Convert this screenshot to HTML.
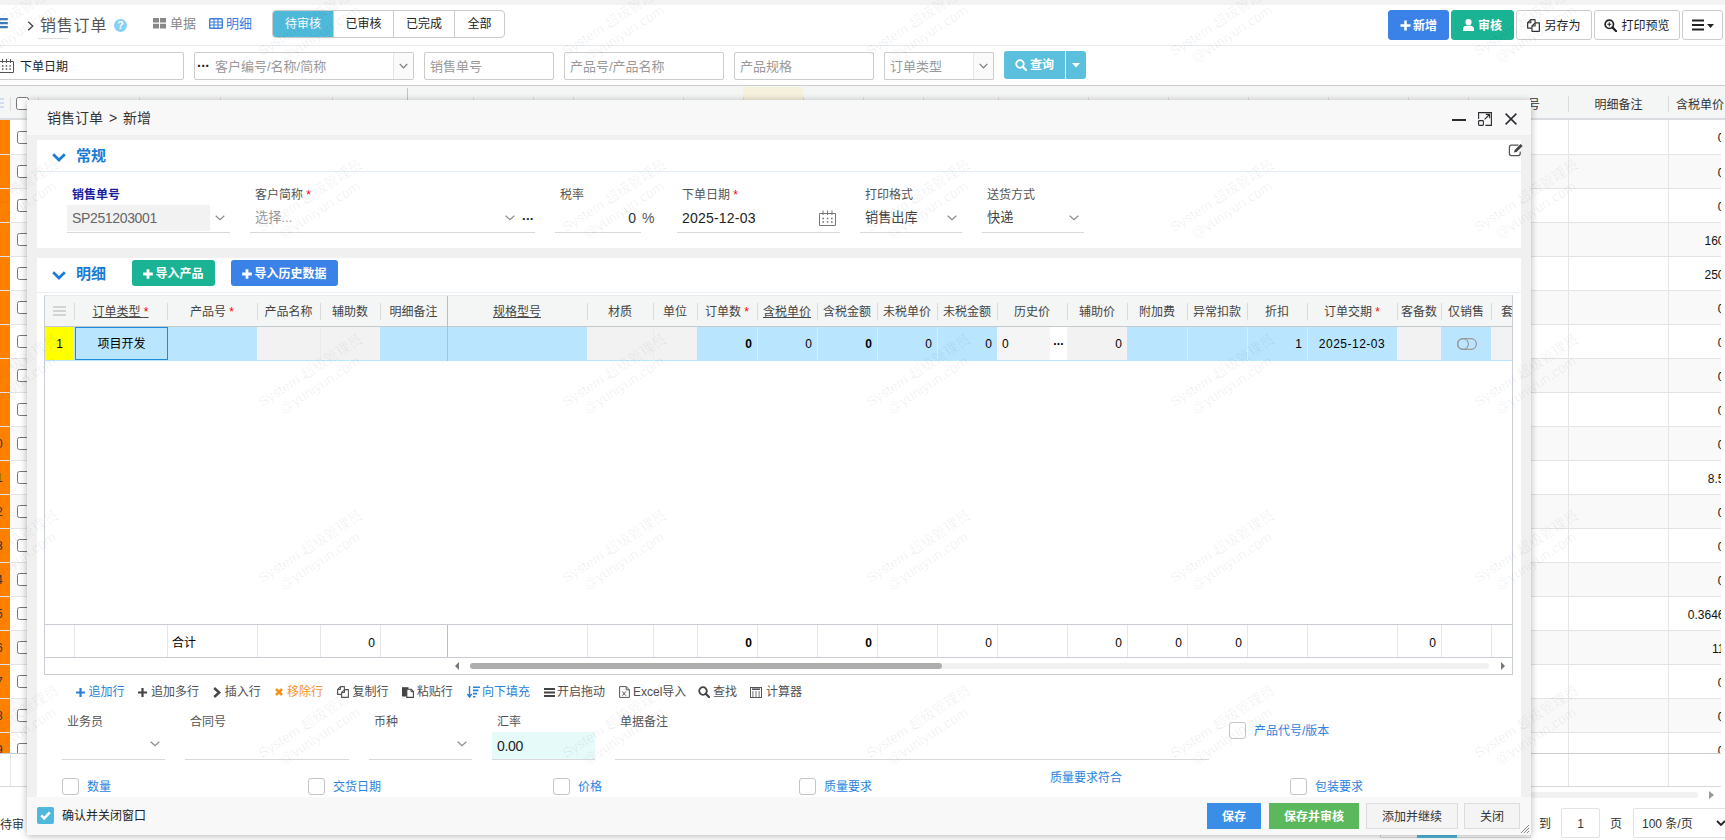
<!DOCTYPE html>
<html lang="zh-CN">
<head>
<meta charset="utf-8">
<title>销售订单</title>
<style>
*{box-sizing:border-box;margin:0;padding:0}
html,body{width:1725px;height:840px;overflow:hidden;background:#fff}
body{font-family:"Liberation Sans","Noto Sans CJK SC",sans-serif;font-size:12px;color:#333;position:relative}
.abs{position:absolute}
svg{display:block}
/* ---------- background page ---------- */
#topstrip{left:0;top:0;width:1725px;height:5px;background:#f3f3f4}
#hdrline{left:0;top:45px;width:1725px;height:1px;background:#e7eaec}
#fltline{left:0;top:85px;width:1725px;height:1px;background:#cfcfcf}
.title{left:41px;top:12px;font-size:18px;line-height:24px;color:#555;letter-spacing:1px;white-space:nowrap}
.tabs{left:272px;top:10px;height:28px;display:flex;border:1px solid #ccc;border-radius:4px;overflow:hidden;background:#fff}
.tabs div{height:26px;line-height:27px;text-align:center;font-size:12px;color:#222;border-right:1px solid #ccc}
.tabs div:last-child{border-right:0}
.tabs .on{background:#4fb9d9;color:#fff}
.tbtn{top:10px;height:30px;line-height:30px;border-radius:3px;font-size:12px;white-space:nowrap;text-align:center;color:#222;border:1px solid #ccc;background:#fff}
.finp{top:52px;height:28px;border:1px solid #ccc;border-radius:2px;background:#fff;font-size:13px;line-height:27px;color:#999;padding-left:5px;white-space:nowrap;overflow:hidden}
#bgtable{left:0;top:86px;width:1725px;height:700px;
  background:#fff}
.bgrow{left:0;width:1725px;height:34px;border-bottom:1px solid #e4e4e4}
.bgrow.alt{background:#f9f9f9}
.cb{width:13px;height:13px;border:1px solid #767676;border-radius:2.5px;background:#fff}
.vline{width:1px;background:#e6e6e6}
/* ---------- modal ---------- */
#modal{left:27px;top:100px;width:1504px;height:735px;background:#f0f0f0;box-shadow:0 1px 6px rgba(0,0,0,.28);overflow:hidden}
#mhead{left:0;top:0;width:1504px;height:35px;background:#f8f8f8}
#mfoot{left:0;top:697px;width:1504px;height:38px;background:#f8f8f8}
.panel{background:#fff}
.h5{font-size:15px;font-weight:bold;color:#1a7bd4;line-height:20px;white-space:nowrap}
.lbl{font-size:12px;color:#555;line-height:16px;white-space:nowrap}
.red{color:#f00}
.uline{height:1px;background:#d9d9d9}
.val{font-size:13.2px;line-height:20px;color:#333;white-space:nowrap}
.btn{border-radius:3px;color:#fff;font-size:12px;text-align:center;white-space:nowrap}
/* grid */
#grid{left:17px;top:195px;width:1469px;height:379px;border:1px solid #c9d0d6;background:#fff;overflow:hidden}
.gh{top:0;height:31px;background:#f5f7f7;line-height:31px;text-align:center;font-size:12px;color:#444;white-space:nowrap;overflow:hidden}
.gh u{text-decoration:underline}
.gsep{top:9px;width:1px;height:17px;background:#dcdcdc}
.gc{top:32px;height:33px;line-height:33px;font-size:12px;color:#000;white-space:nowrap;overflow:hidden;padding:0 5px}
.gc.b{background:#b9e5fe}
.gc.g{background:#f2f2f2}
.gc.r{text-align:right}
.gt{top:329px;height:32px;line-height:32px;font-size:12px;color:#000;text-align:right;padding:0 5px;border-left:1px solid #e3e3e3}
.tool{top:583px;font-size:12px;line-height:18px;color:#444;white-space:nowrap}
.chk{width:17px;height:17px;border:1px solid #c4c4c4;border-radius:3px;background:#fff}
.clbl{font-size:12px;line-height:16px;color:#2b83e0;white-space:nowrap}
.fb{line-height:29px;font-size:12px;text-align:center;white-space:nowrap}
.wm{font-size:14px;line-height:17px;color:rgba(0,0,0,.065);transform:rotate(-33deg);transform-origin:center;white-space:nowrap;text-align:center;pointer-events:none}
.ghd{background:none;text-align:center;font-size:12px;color:#444;white-space:nowrap;overflow:hidden}
.gcell{line-height:35px;font-size:12px;color:#000;white-space:nowrap;overflow:hidden;padding:0 5px}
.tool{top:auto}
</style>
</head>
<body>
<!-- ======= BACKGROUND PAGE ======= -->
<div class="abs" style="left:0px;top:0px;width:1725px;height:5px;background:#f3f3f4"></div>
<div class="abs" style="left:0px;top:45px;width:1725px;height:1px;background:#e7eaec"></div>
<div class="abs" style="left:0px;top:85px;width:1725px;height:1px;background:#cdcdcd"></div>
<svg class="abs" style="left:0;top:17px" width="10" height="12" viewBox="0 0 10 12"><path d="M-4 2.2h11.8M-4 6.2h11.8M-4 10.2h11.8" stroke="#3f7cba" stroke-width="2.2" fill="none"/></svg>
<svg class="abs" style="left:27px;top:21px" width="7" height="10" viewBox="0 0 7 10"><path d="M1.2 .8l4.6 4.2-4.6 4.2" stroke="#444" stroke-width="1.3" fill="none"/></svg>
<div class="abs" style="left:40px;top:14px;font-size:16px;line-height:24px;color:#555;letter-spacing:.8px;white-space:nowrap">销售订单</div>
<div class="abs" style="left:38px;top:38px;width:30px;height:1px;background:#ddd"></div>
<svg class="abs" style="left:114px;top:19px" width="13" height="13" viewBox="0 0 13 13"><circle cx="6.5" cy="6.5" r="6.5" fill="#84d0f6"/><text x="6.5" y="10.3" font-size="10.5" font-weight="bold" fill="#fff" text-anchor="middle" font-family="Liberation Sans,sans-serif">?</text></svg>
<svg class="abs" style="left:153px;top:18px" width="13" height="11" viewBox="0 0 13 11"><path d="M0 0h6v4.6H0zM7 0h6v4.6H7zM0 5.8h6v4.6H0zM7 5.8h6v4.6H7z" fill="#888"/></svg>
<div class="abs" style="left:170px;top:15px;font-size:13px;line-height:18px;color:#888;white-space:nowrap">单据</div>
<svg class="abs" style="left:209px;top:18px" width="14" height="11" viewBox="0 0 14 11"><rect x=".7" y=".7" width="12.6" height="9.6" rx="1" fill="none" stroke="#3b7de0" stroke-width="1.4"/><path d="M.7 4h12.6M.7 7h12.6M5 .7v9.6M9 .7v9.6" stroke="#3b7de0" stroke-width="1.1"/></svg>
<div class="abs" style="left:226px;top:15px;font-size:13px;line-height:18px;color:#3b7de0;white-space:nowrap">明细</div>
<div class="abs tabs"><div class="on" style="width:61px">待审核</div><div style="width:60px">已审核</div><div style="width:61px">已完成</div><div style="width:49px">全部</div></div>
<div class="abs tbtn" style="left:1388px;top:10px;width:61px;height:30px;background:#3b82e8;border-color:#3b82e8;color:#fff;font-weight:bold"><svg style="display:inline-block;vertical-align:-1px;margin-right:2px" width="11" height="11" viewBox="0 0 11 11"><path d="M5.5 .5v10M.5 5.5h10" stroke="#fff" stroke-width="2.6" fill="none"/></svg>新增</div>
<div class="abs tbtn" style="left:1451px;top:10px;width:63px;height:30px;background:#1ab394;border-color:#1ab394;color:#fff;font-weight:bold"><svg style="display:inline-block;vertical-align:-1px;margin-right:4px" width="11" height="12" viewBox="0 0 11 12"><circle cx="5.5" cy="3.2" r="3.1" fill="#fff"/><path d="M0 12V9.6C0 7.8 2 7 3.5 6.8h4C9 7 11 7.8 11 9.6V12z" fill="#fff"/></svg>审核</div>
<div class="abs tbtn" style="left:1516px;top:10px;width:76px;height:30px;"><svg style="display:inline-block;vertical-align:-2px;margin-right:4px" width="13" height="13" viewBox="0 0 12 12"><path d="M7.4 3.3V.6H3.5L.6 3.5v4.9h3.8" stroke="#333" stroke-width="1.1" fill="none" stroke-linejoin="round"/><path d="M3.5 .6v2.9H.6" stroke="#333" stroke-width="1" fill="none"/><path d="M7.5 3.6h3.9v7.8H4.6V6.5z" stroke="#333" stroke-width="1.1" fill="none" stroke-linejoin="round"/><path d="M7.5 3.6v2.9H4.6" stroke="#333" stroke-width="1" fill="none"/></svg>另存为</div>
<div class="abs tbtn" style="left:1594px;top:10px;width:86px;height:30px;"><svg style="display:inline-block;vertical-align:-2px;margin-right:4px" width="13" height="13" viewBox="0 0 13 13"><circle cx="5.3" cy="5.3" r="4.2" stroke="#222" stroke-width="1.7" fill="none"/><path d="M8.4 8.4l3.8 3.8" stroke="#222" stroke-width="2.2" stroke-linecap="round"/><path d="M5.3 3.3v4M3.3 5.3h4" stroke="#222" stroke-width="1.1"/></svg>打印预览</div>
<div class="abs tbtn" style="left:1682px;top:10px;width:41px;height:30px;"><svg style="display:inline-block;vertical-align:-1px" width="22" height="12" viewBox="0 0 22 12"><path d="M0 1.5h12M0 6h12M0 10.5h12" stroke="#222" stroke-width="2"/><path d="M15 5h7l-3.5 4z" fill="#222"/></svg></div>
<div class="abs finp" style="left:-6px;top:52px;width:190px;height:28px;"></div>
<div class="abs" style="left:-1px;top:58px"><svg width="15" height="15" viewBox="0 0 15 15"><path d="M.5 3.5h14v11H.5z" fill="none" stroke="#555" stroke-width="1"/><path d="M3.5 1v4M7.5 1v4M11.5 1v4" stroke="#555" stroke-width="1"/><path d="M3 8h1.5M6.7 8h1.5M10.4 8h1.5M3 11h1.5M6.7 11h1.5M10.4 11h1.5" stroke="#555" stroke-width="1.4"/></svg></div>
<div class="abs" style="left:20px;top:58px;font-size:12px;line-height:18px;color:#222;white-space:nowrap">下单日期</div>
<div class="abs finp" style="left:194px;top:52px;width:220px;height:28px;padding-left:20px">客户编号/名称/简称</div>
<div class="abs" style="left:197px;top:55px;font-size:14px;line-height:22px;color:#222;font-weight:bold;letter-spacing:-.5px">···</div>
<div class="abs" style="left:393px;top:53px;width:20px;height:26px;background:#fafafa;border-left:1px solid #e5e5e5"></div>
<div class="abs" style="left:399px;top:63px"><svg width="9" height="6" viewBox="0 0 9 6"><path d="M.7 .8l3.8 4L8.3 .8" stroke="#777" stroke-width="1.2" fill="none"/></svg></div>
<div class="abs finp" style="left:424px;top:52px;width:130px;height:28px;">销售单号</div>
<div class="abs finp" style="left:564px;top:52px;width:160px;height:28px;">产品号/产品名称</div>
<div class="abs finp" style="left:734px;top:52px;width:140px;height:28px;">产品规格</div>
<div class="abs finp" style="left:884px;top:52px;width:110px;height:28px;border-radius:1px;line-height:28px">订单类型</div>
<div class="abs" style="left:973px;top:53px;width:20px;height:26px;background:#fafafa;border-left:1px solid #e5e5e5"></div>
<div class="abs" style="left:979px;top:63px"><svg width="9" height="6" viewBox="0 0 9 6"><path d="M.7 .8l3.8 4L8.3 .8" stroke="#777" stroke-width="1.2" fill="none"/></svg></div>
<div class="abs" style="left:1004px;top:51px;width:61px;height:28px;background:#5bc0de;border-radius:3px 0 0 3px;color:#fff;font-size:12px;font-weight:bold;line-height:29px;text-align:center;white-space:nowrap"><svg style="display:inline-block;vertical-align:-2px;margin-right:3px" width="12" height="12" viewBox="0 0 12 12"><circle cx="5" cy="5" r="3.8" stroke="#fff" stroke-width="1.8" fill="none"/><path d="M7.8 7.8l3.2 3.2" stroke="#fff" stroke-width="2.2" stroke-linecap="round"/></svg>查询</div>
<div class="abs" style="left:1066px;top:51px;width:20px;height:28px;background:#5bc0de;border-radius:0 3px 3px 0"><svg style="margin:12px 0 0 6px" width="8" height="5" viewBox="0 0 8 5"><path d="M0 0h8L4 4.5z" fill="#fff"/></svg></div>
<div class="abs" style="left:0px;top:86px;width:1725px;height:34px;background:#f4f6f6;border-bottom:2px solid #d9dddf"></div>
<div class="abs" style="left:743px;top:87px;width:60px;height:32px;background:#f5f1dc"></div>
<svg class="abs" style="left:0;top:98px" width="6" height="10" viewBox="0 0 6 10"><path d="M-3 1h7M-3 5h7M-3 9h7" stroke="#c4d4f4" stroke-width="1.4"/></svg>
<div class="abs" style="left:10px;top:97px;width:1px;height:14px;background:#ddd"></div>
<div class="abs cb" style="left:16px;top:97px;width:13px;height:13px;"></div>
<div class="abs" style="left:38px;top:97px;width:1px;height:14px;background:#dcdcdc"></div>
<div class="abs" style="left:139px;top:97px;width:1px;height:14px;background:#dcdcdc"></div>
<div class="abs" style="left:220px;top:97px;width:1px;height:14px;background:#dcdcdc"></div>
<div class="abs" style="left:332px;top:97px;width:1px;height:14px;background:#dcdcdc"></div>
<div class="abs" style="left:473px;top:97px;width:1px;height:14px;background:#dcdcdc"></div>
<div class="abs" style="left:533px;top:97px;width:1px;height:14px;background:#dcdcdc"></div>
<div class="abs" style="left:573px;top:97px;width:1px;height:14px;background:#dcdcdc"></div>
<div class="abs" style="left:683px;top:97px;width:1px;height:14px;background:#dcdcdc"></div>
<div class="abs" style="left:743px;top:97px;width:1px;height:14px;background:#dcdcdc"></div>
<div class="abs" style="left:803px;top:97px;width:1px;height:14px;background:#dcdcdc"></div>
<div class="abs" style="left:863px;top:97px;width:1px;height:14px;background:#dcdcdc"></div>
<div class="abs" style="left:923px;top:97px;width:1px;height:14px;background:#dcdcdc"></div>
<div class="abs" style="left:998px;top:97px;width:1px;height:14px;background:#dcdcdc"></div>
<div class="abs" style="left:1088px;top:97px;width:1px;height:14px;background:#dcdcdc"></div>
<div class="abs" style="left:1168px;top:97px;width:1px;height:14px;background:#dcdcdc"></div>
<div class="abs" style="left:1248px;top:97px;width:1px;height:14px;background:#dcdcdc"></div>
<div class="abs" style="left:1328px;top:97px;width:1px;height:14px;background:#dcdcdc"></div>
<div class="abs" style="left:1408px;top:97px;width:1px;height:14px;background:#dcdcdc"></div>
<div class="abs" style="left:1468px;top:97px;width:1px;height:14px;background:#dcdcdc"></div>
<div class="abs" style="left:407px;top:88px;width:1px;height:31px;background:#bfc4c8"></div>
<div class="abs" style="left:1568px;top:96px;width:1px;height:16px;background:#dcdcdc"></div>
<div class="abs" style="left:1668px;top:96px;width:1px;height:16px;background:#dcdcdc"></div>
<div class="abs" style="left:1528px;top:97px;font-size:12px;line-height:16px;color:#333">号</div>
<div class="abs" style="left:1569px;top:87px;width:99px;height:32px;text-align:center;font-size:12px;line-height:37px;color:#333;white-space:nowrap">明细备注</div>
<div class="abs" style="left:1676px;top:96px;font-size:12px;line-height:18px;color:#333;white-space:nowrap">含税单价</div>
<div class="abs" style="left:0px;top:120px;width:1721px;height:35px;background:#fff;border-bottom:1px solid #e3e3e3;overflow:hidden"><div class="abs" style="left:0;top:0;width:10px;height:35px;background:#ff8000;border-bottom:1px solid #f6b77c"></div><div class="abs cb" style="left:17px;top:10.5px"></div><div class="abs" style="right:-3.5px;top:9.0px;line-height:18px;font-size:12px;color:#111;white-space:nowrap">0</div></div>
<div class="abs" style="left:0px;top:155px;width:1721px;height:34px;background:#f9f9f9;border-bottom:1px solid #e3e3e3;overflow:hidden"><div class="abs" style="left:0;top:0;width:10px;height:34px;background:#ff8000;border-bottom:1px solid #f6b77c"></div><div class="abs cb" style="left:17px;top:10.0px"></div><div class="abs" style="right:-3.5px;top:8.5px;line-height:18px;font-size:12px;color:#111;white-space:nowrap">0</div></div>
<div class="abs" style="left:0px;top:189px;width:1721px;height:34px;background:#fff;border-bottom:1px solid #e3e3e3;overflow:hidden"><div class="abs" style="left:0;top:0;width:10px;height:34px;background:#ff8000;border-bottom:1px solid #f6b77c"></div><div class="abs cb" style="left:17px;top:10.0px"></div><div class="abs" style="right:-3.5px;top:8.5px;line-height:18px;font-size:12px;color:#111;white-space:nowrap">0</div></div>
<div class="abs" style="left:0px;top:223px;width:1721px;height:34px;background:#f9f9f9;border-bottom:1px solid #e3e3e3;overflow:hidden"><div class="abs" style="left:0;top:0;width:10px;height:34px;background:#ff8000;border-bottom:1px solid #f6b77c"></div><div class="abs cb" style="left:17px;top:10.0px"></div><div class="abs" style="right:-3.5px;top:8.5px;line-height:18px;font-size:12px;color:#111;white-space:nowrap">160</div></div>
<div class="abs" style="left:0px;top:257px;width:1721px;height:34px;background:#fff;border-bottom:1px solid #e3e3e3;overflow:hidden"><div class="abs" style="left:0;top:0;width:10px;height:34px;background:#ff8000;border-bottom:1px solid #f6b77c"></div><div class="abs cb" style="left:17px;top:10.0px"></div><div class="abs" style="right:-3.5px;top:8.5px;line-height:18px;font-size:12px;color:#111;white-space:nowrap">250</div></div>
<div class="abs" style="left:0px;top:291px;width:1721px;height:34px;background:#f9f9f9;border-bottom:1px solid #e3e3e3;overflow:hidden"><div class="abs" style="left:0;top:0;width:10px;height:34px;background:#ff8000;border-bottom:1px solid #f6b77c"></div><div class="abs cb" style="left:17px;top:10.0px"></div><div class="abs" style="right:-3.5px;top:8.5px;line-height:18px;font-size:12px;color:#111;white-space:nowrap">0</div></div>
<div class="abs" style="left:0px;top:325px;width:1721px;height:34px;background:#fff;border-bottom:1px solid #e3e3e3;overflow:hidden"><div class="abs" style="left:0;top:0;width:10px;height:34px;background:#ff8000;border-bottom:1px solid #f6b77c"></div><div class="abs cb" style="left:17px;top:10.0px"></div><div class="abs" style="right:-3.5px;top:8.5px;line-height:18px;font-size:12px;color:#111;white-space:nowrap">0</div></div>
<div class="abs" style="left:0px;top:359px;width:1721px;height:34px;background:#f9f9f9;border-bottom:1px solid #e3e3e3;overflow:hidden"><div class="abs" style="left:0;top:0;width:10px;height:34px;background:#ff8000;border-bottom:1px solid #f6b77c"></div><div class="abs cb" style="left:17px;top:10.0px"></div><div class="abs" style="right:-3.5px;top:8.5px;line-height:18px;font-size:12px;color:#111;white-space:nowrap">0</div></div>
<div class="abs" style="left:0px;top:393px;width:1721px;height:34px;background:#fff;border-bottom:1px solid #e3e3e3;overflow:hidden"><div class="abs" style="left:0;top:0;width:10px;height:34px;background:#ff8000;border-bottom:1px solid #f6b77c"></div><div class="abs cb" style="left:17px;top:10.0px"></div><div class="abs" style="right:-3.5px;top:8.5px;line-height:18px;font-size:12px;color:#111;white-space:nowrap">0</div></div>
<div class="abs" style="left:0px;top:427px;width:1721px;height:34px;background:#f9f9f9;border-bottom:1px solid #e3e3e3;overflow:hidden"><div class="abs" style="left:0;top:0;width:10px;height:34px;background:#ff8000;border-bottom:1px solid #f6b77c"></div><div class="abs" style="left:-4px;top:9.0px;font-size:12px;line-height:16px;color:#333">0</div><div class="abs cb" style="left:17px;top:10.0px"></div><div class="abs" style="right:-3.5px;top:8.5px;line-height:18px;font-size:12px;color:#111;white-space:nowrap">0</div></div>
<div class="abs" style="left:0px;top:461px;width:1721px;height:34px;background:#fff;border-bottom:1px solid #e3e3e3;overflow:hidden"><div class="abs" style="left:0;top:0;width:10px;height:34px;background:#ff8000;border-bottom:1px solid #f6b77c"></div><div class="abs" style="left:-4px;top:9.0px;font-size:12px;line-height:16px;color:#333">1</div><div class="abs cb" style="left:17px;top:10.0px"></div><div class="abs" style="right:-3.5px;top:8.5px;line-height:18px;font-size:12px;color:#111;white-space:nowrap">8.5</div></div>
<div class="abs" style="left:0px;top:495px;width:1721px;height:34px;background:#f9f9f9;border-bottom:1px solid #e3e3e3;overflow:hidden"><div class="abs" style="left:0;top:0;width:10px;height:34px;background:#ff8000;border-bottom:1px solid #f6b77c"></div><div class="abs" style="left:-4px;top:9.0px;font-size:12px;line-height:16px;color:#333">2</div><div class="abs cb" style="left:17px;top:10.0px"></div><div class="abs" style="right:-3.5px;top:8.5px;line-height:18px;font-size:12px;color:#111;white-space:nowrap">0</div></div>
<div class="abs" style="left:0px;top:529px;width:1721px;height:34px;background:#fff;border-bottom:1px solid #e3e3e3;overflow:hidden"><div class="abs" style="left:0;top:0;width:10px;height:34px;background:#ff8000;border-bottom:1px solid #f6b77c"></div><div class="abs" style="left:-4px;top:9.0px;font-size:12px;line-height:16px;color:#333">3</div><div class="abs cb" style="left:17px;top:10.0px"></div><div class="abs" style="right:-3.5px;top:8.5px;line-height:18px;font-size:12px;color:#111;white-space:nowrap">0</div></div>
<div class="abs" style="left:0px;top:563px;width:1721px;height:34px;background:#f9f9f9;border-bottom:1px solid #e3e3e3;overflow:hidden"><div class="abs" style="left:0;top:0;width:10px;height:34px;background:#ff8000;border-bottom:1px solid #f6b77c"></div><div class="abs" style="left:-4px;top:9.0px;font-size:12px;line-height:16px;color:#333">4</div><div class="abs cb" style="left:17px;top:10.0px"></div><div class="abs" style="right:-3.5px;top:8.5px;line-height:18px;font-size:12px;color:#111;white-space:nowrap">0</div></div>
<div class="abs" style="left:0px;top:597px;width:1721px;height:34px;background:#fff;border-bottom:1px solid #e3e3e3;overflow:hidden"><div class="abs" style="left:0;top:0;width:10px;height:34px;background:#ff8000;border-bottom:1px solid #f6b77c"></div><div class="abs" style="left:-4px;top:9.0px;font-size:12px;line-height:16px;color:#333">5</div><div class="abs cb" style="left:17px;top:10.0px"></div><div class="abs" style="right:-3.5px;top:8.5px;line-height:18px;font-size:12px;color:#111;white-space:nowrap">0.3646</div></div>
<div class="abs" style="left:0px;top:631px;width:1721px;height:34px;background:#f9f9f9;border-bottom:1px solid #e3e3e3;overflow:hidden"><div class="abs" style="left:0;top:0;width:10px;height:34px;background:#ff8000;border-bottom:1px solid #f6b77c"></div><div class="abs" style="left:-4px;top:9.0px;font-size:12px;line-height:16px;color:#333">6</div><div class="abs cb" style="left:17px;top:10.0px"></div><div class="abs" style="right:-3.5px;top:8.5px;line-height:18px;font-size:12px;color:#111;white-space:nowrap">11</div></div>
<div class="abs" style="left:0px;top:665px;width:1721px;height:34px;background:#fff;border-bottom:1px solid #e3e3e3;overflow:hidden"><div class="abs" style="left:0;top:0;width:10px;height:34px;background:#ff8000;border-bottom:1px solid #f6b77c"></div><div class="abs" style="left:-4px;top:9.0px;font-size:12px;line-height:16px;color:#333">7</div><div class="abs cb" style="left:17px;top:10.0px"></div><div class="abs" style="right:-3.5px;top:8.5px;line-height:18px;font-size:12px;color:#111;white-space:nowrap">0</div></div>
<div class="abs" style="left:0px;top:699px;width:1721px;height:34px;background:#f9f9f9;border-bottom:1px solid #e3e3e3;overflow:hidden"><div class="abs" style="left:0;top:0;width:10px;height:34px;background:#ff8000;border-bottom:1px solid #f6b77c"></div><div class="abs" style="left:-4px;top:9.0px;font-size:12px;line-height:16px;color:#333">8</div><div class="abs cb" style="left:17px;top:10.0px"></div><div class="abs" style="right:-3.5px;top:8.5px;line-height:18px;font-size:12px;color:#111;white-space:nowrap">0</div></div>
<div class="abs" style="left:0px;top:733px;width:1721px;height:20px;background:#fff;overflow:hidden"><div class="abs" style="left:0;top:0;width:10px;height:20px;background:#ff8000;"></div><div class="abs" style="left:-4px;top:9.0px;font-size:12px;line-height:16px;color:#333">9</div><div class="abs cb" style="left:17px;top:10.0px"></div><div class="abs" style="right:-3.5px;top:8.5px;line-height:18px;font-size:12px;color:#111;white-space:nowrap">0</div></div>
<div class="abs" style="left:1568px;top:120px;width:1px;height:666px;background:#e6e6e6"></div>
<div class="abs" style="left:1668px;top:120px;width:1px;height:666px;background:#e6e6e6"></div>
<div class="abs" style="left:10px;top:753px;width:1px;height:33px;background:#e6e6e6"></div>
<div class="abs" style="left:30px;top:753px;width:1px;height:33px;background:#e6e6e6"></div>
<div class="abs" style="left:0px;top:753px;width:1721px;height:1px;background:#c9cfd3"></div>
<div class="abs" style="left:0px;top:786px;width:1721px;height:1px;background:#d9d9d9"></div>
<div class="abs" style="left:1531px;top:792px;width:167px;height:6px;background:#f1f1f1;border-radius:3px"></div>
<svg class="abs" style="left:1709px;top:791px" width="5" height="8" viewBox="0 0 5 8"><path d="M0 0l5 4-5 4z" fill="#999"/></svg>
<div class="abs" style="left:0px;top:817px;font-size:12px;line-height:16px;color:#333;white-space:nowrap">待审</div>
<div class="abs" style="left:1539px;top:815px;font-size:12px;line-height:18px;color:#333">到</div>
<div class="abs" style="left:1561px;top:808px;width:39px;height:30px;border:1px solid #e2e2e2;border-radius:2px;text-align:center;font-size:12px;line-height:30px;color:#333">1</div>
<div class="abs" style="left:1610px;top:815px;font-size:12px;line-height:18px;color:#333">页</div>
<div class="abs" style="left:1633px;top:808px;width:100px;height:30px;border:1px solid #e2e2e2;border-radius:2px;font-size:12px;line-height:30px;color:#333;padding-left:8px;white-space:nowrap">100 条/页</div>
<svg class="abs" style="left:1716px;top:820px" width="10" height="7" viewBox="0 0 10 7"><path d="M1 1l4 4 4-4" stroke="#222" stroke-width="1.8" fill="none"/></svg>
<div class="abs" style="left:1380px;top:808px;width:151px;height:30px;border:1px solid #ddd"></div>
<div class="abs" style="left:1417px;top:808px;width:40px;height:30px;background:#4fb9d9"></div>
<!-- ======= MODAL ======= -->
<div class="abs" style="left:27px;top:100px;width:1504px;height:735px;background:#f0f0f0;box-shadow:0 1px 7px rgba(0,0,0,.3)"></div>
<div class="abs" style="left:27px;top:100px;width:1504px;height:35px;background:#f8f8f8"></div>
<div class="abs" style="left:47px;top:107px;font-size:14px;line-height:22px;color:#333;white-space:nowrap;word-spacing:2px">销售订单 &gt; 新增</div>
<div class="abs" style="left:1452px;top:119px;width:14px;height:2px;background:#2a2a33"></div>
<svg class="abs" style="left:1478px;top:112px" width="14" height="14" viewBox="0 0 14 14"><path d="M.6 7V.6h12.8v12.8H7.4" stroke="#2a2a33" stroke-width="1.1" fill="none"/><rect x=".6" y="8.6" width="4.8" height="4.8" rx=".8" fill="none" stroke="#2a2a33" stroke-width="1.1"/><path d="M6.6 7.4l4.9-4.9M7.8 2.4h3.8v3.8" stroke="#2a2a33" stroke-width="1.1" fill="none"/></svg>
<svg class="abs" style="left:1505px;top:113px" width="12" height="12" viewBox="0 0 12 12"><path d="M.6 .6l10.8 10.8M11.4 .6L.6 11.4" stroke="#2a2a33" stroke-width="1.5"/></svg>
<div class="abs" style="left:37px;top:140px;width:1484px;height:108px;background:#fff"></div>
<div class="abs" style="left:52px;top:153px"><svg width="14" height="9" viewBox="0 0 14 9"><path d="M1.2 1.2L7 7l5.8-5.8" stroke="#1a7bd4" stroke-width="2.7" fill="none"/></svg></div>
<div class="abs h5" style="left:76px;top:146px;">常规</div>
<div class="abs" style="left:37px;top:171px;width:1484px;height:1px;background:#e4edf3"></div>
<svg class="abs" style="left:1508px;top:143px" width="16" height="14" viewBox="0 0 16 14"><path d="M10.5 2.2H3.4a2 2 0 0 0-2 2v6.4a2 2 0 0 0 2 2h6.8a2 2 0 0 0 2-2V8.6" stroke="#555" stroke-width="1.2" fill="none"/><path d="M6 9.6l.6-2.6 6-6 2 2-6 6z" fill="#444"/></svg>
<div class="abs lbl" style="left:72px;top:187px;color:#1c1c9e;font-weight:bold">销售单号</div>
<div class="abs" style="left:67px;top:205px;width:143px;height:26px;background:#f2f2f2"></div>
<div class="abs val" style="left:72px;top:208px;color:#666;font-size:14px;letter-spacing:-.35px">SP251203001</div>
<div class="abs" style="left:215px;top:215px"><svg width="10" height="6" viewBox="0 0 10 6"><path d="M.7 .8l4.3 4L9.3 .8" stroke="#8c8c8c" stroke-width="1.2" fill="none"/></svg></div>
<div class="abs uline" style="left:67px;top:232px;width:163px;height:1px;"></div>
<div class="abs lbl" style="left:255px;top:187px;">客户简称 <span class="red">*</span></div>
<div class="abs val" style="left:255px;top:208px;color:#999">选择...</div>
<div class="abs" style="left:505px;top:215px"><svg width="10" height="6" viewBox="0 0 10 6"><path d="M.7 .8l4.3 4L9.3 .8" stroke="#8c8c8c" stroke-width="1.2" fill="none"/></svg></div>
<div class="abs val" style="left:522px;top:209px;color:#222;font-weight:bold;letter-spacing:-.5px">···</div>
<div class="abs uline" style="left:250px;top:232px;width:285px;height:1px;"></div>
<div class="abs lbl" style="left:560px;top:187px;">税率</div>
<div class="abs val" style="left:555px;top:208px;width:81px;height:20px;text-align:right;font-size:14px">0</div>
<div class="abs val" style="left:642px;top:208px;color:#555;font-size:14px">%</div>
<div class="abs uline" style="left:555px;top:232px;width:86px;height:1px;"></div>
<div class="abs lbl" style="left:682px;top:187px;">下单日期 <span class="red">*</span></div>
<div class="abs val" style="left:682px;top:208px;color:#222;font-size:14px;letter-spacing:.2px">2025-12-03</div>
<div class="abs" style="left:819px;top:210px"><svg width="17" height="16" viewBox="0 0 17 16"><path d="M.5 3.5h16v12H.5z" fill="none" stroke="#777" stroke-width="1"/><path d="M4 .5v4.5M8.5 .5v4.5M13 .5v4.5" stroke="#777" stroke-width="1"/><path d="M3.4 8.5h1.6M7.7 8.5h1.6M12 8.5h1.6M3.4 12h1.6M7.7 12h1.6M12 12h1.6" stroke="#777" stroke-width="1.5"/></svg></div>
<div class="abs uline" style="left:677px;top:232px;width:163px;height:1px;"></div>
<div class="abs lbl" style="left:865px;top:187px;">打印格式</div>
<div class="abs val" style="left:865px;top:208px;color:#444">销售出库</div>
<div class="abs" style="left:947px;top:215px"><svg width="10" height="6" viewBox="0 0 10 6"><path d="M.7 .8l4.3 4L9.3 .8" stroke="#8c8c8c" stroke-width="1.2" fill="none"/></svg></div>
<div class="abs uline" style="left:860px;top:232px;width:102px;height:1px;"></div>
<div class="abs lbl" style="left:987px;top:187px;">送货方式</div>
<div class="abs val" style="left:987px;top:208px;color:#444">快递</div>
<div class="abs" style="left:1069px;top:215px"><svg width="10" height="6" viewBox="0 0 10 6"><path d="M.7 .8l4.3 4L9.3 .8" stroke="#8c8c8c" stroke-width="1.2" fill="none"/></svg></div>
<div class="abs uline" style="left:982px;top:232px;width:102px;height:1px;"></div>
<div class="abs" style="left:37px;top:258px;width:1484px;height:540px;background:#fff"></div>
<div class="abs" style="left:52px;top:271px"><svg width="14" height="9" viewBox="0 0 14 9"><path d="M1.2 1.2L7 7l5.8-5.8" stroke="#1a7bd4" stroke-width="2.7" fill="none"/></svg></div>
<div class="abs h5" style="left:76px;top:264px;">明细</div>
<div class="abs btn" style="left:132px;top:260px;width:83px;height:26px;background:#1ab394;line-height:28px;font-weight:bold"><svg style="display:inline-block;vertical-align:-1px;margin-right:2px" width="10" height="10" viewBox="0 0 10 10"><path d="M5 .2v9.6M.2 5h9.6" stroke="#fff" stroke-width="2.8" fill="none"/></svg>导入产品</div>
<div class="abs btn" style="left:231px;top:260px;width:107px;height:26px;background:#3b82e8;line-height:28px;font-weight:bold"><svg style="display:inline-block;vertical-align:-1px;margin-right:2px" width="10" height="10" viewBox="0 0 10 10"><path d="M5 .2v9.6M.2 5h9.6" stroke="#fff" stroke-width="2.8" fill="none"/></svg>导入历史数据</div>
<div class="abs" style="left:37px;top:292px;width:1484px;height:1px;background:#e9eff3"></div>
<div class="abs" style="left:44px;top:295px;width:1469px;height:380px;border:1px solid #c8ced3;border-top-color:#e6e9eb;background:#fff"></div>
<div class="abs" style="left:45px;top:296px;width:1467px;height:30px;background:#f4f6f6"></div>
<div class="abs" style="left:45px;top:326px;width:1467px;height:1px;background:#c4c9cd"></div>
<svg class="abs" style="left:53px;top:306px" width="13" height="10" viewBox="0 0 13 10"><path d="M0 1h13M0 5h13M0 9h13" stroke="#c8c8c8" stroke-width="1.6"/></svg>
<div class="abs ghd" style="left:74px;top:296px;width:93px;height:30px;line-height:33px"><u>订单类型 <span class="red">*</span></u></div>
<div class="abs" style="left:74px;top:303px;width:1px;height:17px;background:#dadada"></div>
<div class="abs ghd" style="left:167px;top:296px;width:90px;height:30px;line-height:33px">产品号 <span class="red">*</span></div>
<div class="abs" style="left:167px;top:303px;width:1px;height:17px;background:#dadada"></div>
<div class="abs ghd" style="left:257px;top:296px;width:63px;height:30px;line-height:33px">产品名称</div>
<div class="abs" style="left:257px;top:303px;width:1px;height:17px;background:#dadada"></div>
<div class="abs ghd" style="left:320px;top:296px;width:60px;height:30px;line-height:33px">辅助数</div>
<div class="abs" style="left:320px;top:303px;width:1px;height:17px;background:#dadada"></div>
<div class="abs ghd" style="left:380px;top:296px;width:67px;height:30px;line-height:33px">明细备注</div>
<div class="abs" style="left:380px;top:303px;width:1px;height:17px;background:#dadada"></div>
<div class="abs ghd" style="left:447px;top:296px;width:140px;height:30px;line-height:33px"><u>规格型号</u></div>
<div class="abs ghd" style="left:587px;top:296px;width:66px;height:30px;line-height:33px">材质</div>
<div class="abs" style="left:587px;top:303px;width:1px;height:17px;background:#dadada"></div>
<div class="abs ghd" style="left:653px;top:296px;width:44px;height:30px;line-height:33px">单位</div>
<div class="abs" style="left:653px;top:303px;width:1px;height:17px;background:#dadada"></div>
<div class="abs ghd" style="left:697px;top:296px;width:60px;height:30px;line-height:33px">订单数 <span class="red">*</span></div>
<div class="abs" style="left:697px;top:303px;width:1px;height:17px;background:#dadada"></div>
<div class="abs ghd" style="left:757px;top:296px;width:60px;height:30px;line-height:33px"><u>含税单价</u></div>
<div class="abs" style="left:757px;top:303px;width:1px;height:17px;background:#dadada"></div>
<div class="abs ghd" style="left:817px;top:296px;width:60px;height:30px;line-height:33px">含税金额</div>
<div class="abs" style="left:817px;top:303px;width:1px;height:17px;background:#dadada"></div>
<div class="abs ghd" style="left:877px;top:296px;width:60px;height:30px;line-height:33px">未税单价</div>
<div class="abs" style="left:877px;top:303px;width:1px;height:17px;background:#dadada"></div>
<div class="abs ghd" style="left:937px;top:296px;width:60px;height:30px;line-height:33px">未税金额</div>
<div class="abs" style="left:937px;top:303px;width:1px;height:17px;background:#dadada"></div>
<div class="abs ghd" style="left:997px;top:296px;width:70px;height:30px;line-height:33px">历史价</div>
<div class="abs" style="left:997px;top:303px;width:1px;height:17px;background:#dadada"></div>
<div class="abs ghd" style="left:1067px;top:296px;width:60px;height:30px;line-height:33px">辅助价</div>
<div class="abs" style="left:1067px;top:303px;width:1px;height:17px;background:#dadada"></div>
<div class="abs ghd" style="left:1127px;top:296px;width:60px;height:30px;line-height:33px">附加费</div>
<div class="abs" style="left:1127px;top:303px;width:1px;height:17px;background:#dadada"></div>
<div class="abs ghd" style="left:1187px;top:296px;width:60px;height:30px;line-height:33px">异常扣款</div>
<div class="abs" style="left:1187px;top:303px;width:1px;height:17px;background:#dadada"></div>
<div class="abs ghd" style="left:1247px;top:296px;width:60px;height:30px;line-height:33px">折扣</div>
<div class="abs" style="left:1247px;top:303px;width:1px;height:17px;background:#dadada"></div>
<div class="abs ghd" style="left:1307px;top:296px;width:90px;height:30px;line-height:33px">订单交期 <span class="red">*</span></div>
<div class="abs" style="left:1307px;top:303px;width:1px;height:17px;background:#dadada"></div>
<div class="abs ghd" style="left:1397px;top:296px;width:44px;height:30px;line-height:33px">客备数</div>
<div class="abs" style="left:1397px;top:303px;width:1px;height:17px;background:#dadada"></div>
<div class="abs ghd" style="left:1441px;top:296px;width:50px;height:30px;line-height:33px">仅销售</div>
<div class="abs" style="left:1441px;top:303px;width:1px;height:17px;background:#dadada"></div>
<div class="abs ghd" style="left:1491px;top:296px;width:21px;height:30px;text-align:left;padding-left:10px;line-height:33px">套餐</div>
<div class="abs" style="left:1491px;top:303px;width:1px;height:17px;background:#dadada"></div>
<div class="abs" style="left:45px;top:327px;width:1467px;height:34px;background:#b9e5fe"></div>
<div class="abs gcell" style="left:45px;top:327px;width:29px;height:33px;background:#ffff00;text-align:center;">1</div>
<div class="abs gcell" style="left:75px;top:327px;width:93px;height:33px;background:#b9e5fe;border:1px solid #1b8be0;line-height:33px;text-align:center;">项目开发</div>
<div class="abs gcell" style="left:167px;top:327px;width:90px;height:33px;"></div>
<div class="abs gcell" style="left:257px;top:327px;width:63px;height:33px;background:#f2f2f2;"></div>
<div class="abs gcell" style="left:320px;top:327px;width:60px;height:33px;background:#f2f2f2;"></div>
<div class="abs gcell" style="left:380px;top:327px;width:67px;height:33px;"></div>
<div class="abs gcell" style="left:447px;top:327px;width:140px;height:33px;"></div>
<div class="abs gcell" style="left:587px;top:327px;width:66px;height:33px;background:#f2f2f2;"></div>
<div class="abs gcell" style="left:653px;top:327px;width:44px;height:33px;background:#f2f2f2;"></div>
<div class="abs gcell" style="left:697px;top:327px;width:60px;height:33px;text-align:right;"><b>0</b></div>
<div class="abs gcell" style="left:757px;top:327px;width:60px;height:33px;text-align:right;">0</div>
<div class="abs gcell" style="left:817px;top:327px;width:60px;height:33px;text-align:right;"><b>0</b></div>
<div class="abs gcell" style="left:877px;top:327px;width:60px;height:33px;text-align:right;">0</div>
<div class="abs gcell" style="left:937px;top:327px;width:60px;height:33px;text-align:right;">0</div>
<div class="abs gcell" style="left:997px;top:327px;width:70px;height:33px;background:#f5f5f5;">0</div>
<div class="abs gcell" style="left:1050px;top:327px;width:17px;height:33px;background:#fff;text-align:center;padding:0;font-weight:bold;letter-spacing:-.5px">···</div>
<div class="abs gcell" style="left:1067px;top:327px;width:60px;height:33px;background:#f2f2f2;text-align:right;">0</div>
<div class="abs gcell" style="left:1127px;top:327px;width:60px;height:33px;"></div>
<div class="abs gcell" style="left:1187px;top:327px;width:60px;height:33px;"></div>
<div class="abs gcell" style="left:1247px;top:327px;width:60px;height:33px;text-align:right;">1</div>
<div class="abs gcell" style="left:1307px;top:327px;width:90px;height:33px;text-align:center;"><span style="letter-spacing:.5px">2025-12-03</span></div>
<div class="abs gcell" style="left:1397px;top:327px;width:44px;height:33px;background:#f2f2f2;"></div>
<div class="abs gcell" style="left:1441px;top:327px;width:50px;height:33px;"></div>
<div class="abs gcell" style="left:1491px;top:327px;width:21px;height:33px;background:#f2f2f2;"></div>
<div class="abs" style="left:757px;top:327px;width:1px;height:33px;background:rgba(255,255,255,.4)"></div>
<div class="abs" style="left:817px;top:327px;width:1px;height:33px;background:rgba(255,255,255,.4)"></div>
<div class="abs" style="left:877px;top:327px;width:1px;height:33px;background:rgba(255,255,255,.4)"></div>
<div class="abs" style="left:937px;top:327px;width:1px;height:33px;background:rgba(255,255,255,.4)"></div>
<div class="abs" style="left:1187px;top:327px;width:1px;height:33px;background:rgba(255,255,255,.4)"></div>
<div class="abs" style="left:1247px;top:327px;width:1px;height:33px;background:rgba(255,255,255,.4)"></div>
<div class="abs" style="left:1307px;top:327px;width:1px;height:33px;background:rgba(255,255,255,.4)"></div>
<div class="abs" style="left:320px;top:327px;width:1px;height:33px;background:#ececec"></div>
<div class="abs" style="left:653px;top:327px;width:1px;height:33px;background:#ececec"></div>
<svg class="abs" style="left:1457px;top:338px" width="20" height="12" viewBox="0 0 20 12"><rect x=".6" y=".6" width="18.8" height="10.8" rx="5.4" fill="none" stroke="#9a9a9a" stroke-width="1.2"/><circle cx="6" cy="6" r="5.4" fill="none" stroke="#9a9a9a" stroke-width="1.2"/></svg>
<div class="abs" style="left:447px;top:296px;width:1px;height:65px;background:#b9bec2"></div>
<div class="abs" style="left:447px;top:625px;width:1px;height:32px;background:#b9bec2"></div>
<div class="abs" style="left:45px;top:624px;width:1467px;height:1px;background:#c8ced3"></div>
<div class="abs" style="left:45px;top:657px;width:1467px;height:1px;background:#c8ced3"></div>
<div class="abs" style="left:74px;top:625px;width:1px;height:32px;background:#e6e6e6"></div>
<div class="abs" style="left:167px;top:625px;width:1px;height:32px;background:#e6e6e6"></div>
<div class="abs gcell" style="left:167px;top:625px;width:90px;height:32px;text-align:left;background:none;line-height:37px">合计</div>
<div class="abs" style="left:257px;top:625px;width:1px;height:32px;background:#e6e6e6"></div>
<div class="abs" style="left:320px;top:625px;width:1px;height:32px;background:#e6e6e6"></div>
<div class="abs gcell" style="left:320px;top:625px;width:60px;height:32px;text-align:right;background:none;line-height:37px">0</div>
<div class="abs" style="left:380px;top:625px;width:1px;height:32px;background:#e6e6e6"></div>
<div class="abs" style="left:587px;top:625px;width:1px;height:32px;background:#e6e6e6"></div>
<div class="abs" style="left:653px;top:625px;width:1px;height:32px;background:#e6e6e6"></div>
<div class="abs" style="left:697px;top:625px;width:1px;height:32px;background:#e6e6e6"></div>
<div class="abs gcell" style="left:697px;top:625px;width:60px;height:32px;text-align:right;background:none;line-height:37px"><b>0</b></div>
<div class="abs" style="left:757px;top:625px;width:1px;height:32px;background:#e6e6e6"></div>
<div class="abs" style="left:817px;top:625px;width:1px;height:32px;background:#e6e6e6"></div>
<div class="abs gcell" style="left:817px;top:625px;width:60px;height:32px;text-align:right;background:none;line-height:37px"><b>0</b></div>
<div class="abs" style="left:877px;top:625px;width:1px;height:32px;background:#e6e6e6"></div>
<div class="abs" style="left:937px;top:625px;width:1px;height:32px;background:#e6e6e6"></div>
<div class="abs gcell" style="left:937px;top:625px;width:60px;height:32px;text-align:right;background:none;line-height:37px">0</div>
<div class="abs" style="left:997px;top:625px;width:1px;height:32px;background:#e6e6e6"></div>
<div class="abs" style="left:1067px;top:625px;width:1px;height:32px;background:#e6e6e6"></div>
<div class="abs gcell" style="left:1067px;top:625px;width:60px;height:32px;text-align:right;background:none;line-height:37px">0</div>
<div class="abs" style="left:1127px;top:625px;width:1px;height:32px;background:#e6e6e6"></div>
<div class="abs gcell" style="left:1127px;top:625px;width:60px;height:32px;text-align:right;background:none;line-height:37px">0</div>
<div class="abs" style="left:1187px;top:625px;width:1px;height:32px;background:#e6e6e6"></div>
<div class="abs gcell" style="left:1187px;top:625px;width:60px;height:32px;text-align:right;background:none;line-height:37px">0</div>
<div class="abs" style="left:1247px;top:625px;width:1px;height:32px;background:#e6e6e6"></div>
<div class="abs" style="left:1307px;top:625px;width:1px;height:32px;background:#e6e6e6"></div>
<div class="abs" style="left:1397px;top:625px;width:1px;height:32px;background:#e6e6e6"></div>
<div class="abs gcell" style="left:1397px;top:625px;width:44px;height:32px;text-align:right;background:none;line-height:37px">0</div>
<div class="abs" style="left:1441px;top:625px;width:1px;height:32px;background:#e6e6e6"></div>
<div class="abs" style="left:1491px;top:625px;width:1px;height:32px;background:#e6e6e6"></div>
<svg class="abs" style="left:455px;top:662px" width="4" height="8" viewBox="0 0 4 8"><path d="M4 0L0 4l4 4z" fill="#777"/></svg>
<div class="abs" style="left:470px;top:663px;width:1019px;height:6px;background:#f1f1f1;border-radius:3px"></div>
<div class="abs" style="left:470px;top:663px;width:472px;height:6px;background:#adadad;border-radius:3px"></div>
<svg class="abs" style="left:1501px;top:662px" width="4" height="8" viewBox="0 0 4 8"><path d="M0 0l4 4-4 4z" fill="#777"/></svg>
<div class="abs" style="left:76px;top:683px;height:18px;display:flex;align-items:center"><svg width="9" height="9" viewBox="0 0 9 9"><path d="M4.5 0v9M0 4.5h9" stroke="#2a7fd8" stroke-width="2.2"/></svg></div>
<div class="abs tool" style="left:88.5px;top:683px;color:#2a7fd8">追加行</div>
<div class="abs" style="left:138px;top:683px;height:18px;display:flex;align-items:center"><svg width="9" height="9" viewBox="0 0 9 9"><path d="M4.5 0v9M0 4.5h9" stroke="#444" stroke-width="2.2"/></svg></div>
<div class="abs tool" style="left:151px;top:683px;color:#505050">追加多行</div>
<div class="abs" style="left:213px;top:683px;height:18px;display:flex;align-items:center"><svg width="8" height="11" viewBox="0 0 8 11"><path d="M1.2 1l5 4.5-5 4.5" stroke="#444" stroke-width="2.4" fill="none"/></svg></div>
<div class="abs tool" style="left:224.8px;top:683px;color:#505050">插入行</div>
<div class="abs" style="left:275px;top:683px;height:18px;display:flex;align-items:center"><svg width="8" height="8" viewBox="0 0 8 8"><path d="M1 1l6 6M7 1L1 7" stroke="#f7941d" stroke-width="2.5"/></svg></div>
<div class="abs tool" style="left:287px;top:683px;color:#f7941d">移除行</div>
<div class="abs" style="left:337px;top:683px;height:18px;display:flex;align-items:center"><svg style="display:inline-block;vertical-align:-2px;margin:0" width="12" height="12" viewBox="0 0 12 12"><path d="M7.4 3.3V.6H3.5L.6 3.5v4.9h3.8" stroke="#555" stroke-width="1.1" fill="none" stroke-linejoin="round"/><path d="M3.5 .6v2.9H.6" stroke="#555" stroke-width="1" fill="none"/><path d="M7.5 3.6h3.9v7.8H4.6V6.5z" stroke="#555" stroke-width="1.1" fill="none" stroke-linejoin="round"/><path d="M7.5 3.6v2.9H4.6" stroke="#555" stroke-width="1" fill="none"/></svg></div>
<div class="abs tool" style="left:352.5px;top:683px;color:#505050">复制行</div>
<div class="abs" style="left:402px;top:683px;height:18px;display:flex;align-items:center"><svg width="12" height="12" viewBox="0 0 12 12"><path d="M0 1.2h6.5v9.3H0z" fill="#444"/><path d="M4.8 3.3h4.4l2.2 2.2v5.9H4.8z" fill="#fff" stroke="#444" stroke-width="1.1"/><path d="M9 3.3v2.4h2.4" fill="none" stroke="#444" stroke-width="1"/></svg></div>
<div class="abs tool" style="left:416.8px;top:683px;color:#505050">粘贴行</div>
<div class="abs" style="left:467px;top:683px;height:18px;display:flex;align-items:center"><svg width="13" height="12" viewBox="0 0 13 12"><path d="M2.5 0v10.5M.3 8l2.2 3 2.2-3" stroke="#2a7fd8" stroke-width="1.4" fill="none"/><path d="M6 1.2h7M6 4.4h5.5M6 7.6h4M6 10.8h2.5" stroke="#2a7fd8" stroke-width="1.6"/></svg></div>
<div class="abs tool" style="left:482px;top:683px;color:#2a7fd8">向下填充</div>
<div class="abs" style="left:544px;top:683px;height:18px;display:flex;align-items:center"><svg width="11" height="9" viewBox="0 0 11 9"><path d="M0 1h11M0 4.5h11M0 8h11" stroke="#444" stroke-width="2"/></svg></div>
<div class="abs tool" style="left:557px;top:683px;color:#505050">开启拖动</div>
<div class="abs" style="left:619px;top:683px;height:18px;display:flex;align-items:center"><svg width="11" height="12" viewBox="0 0 11 12"><path d="M.6 .6h6.6l3.2 3.2v7.6H.6z" fill="none" stroke="#555" stroke-width="1"/><path d="M7.2 .6v3.2h3.2" fill="none" stroke="#555" stroke-width="1"/><path d="M3.3 5.5l3.6 4.2M6.9 5.5L3.3 9.7" stroke="#555" stroke-width="1"/></svg></div>
<div class="abs tool" style="left:633px;top:683px;color:#505050">Excel导入</div>
<div class="abs" style="left:698px;top:683px;height:18px;display:flex;align-items:center"><svg style="display:inline-block;vertical-align:-2px;margin:0" width="12" height="12" viewBox="0 0 12 12"><circle cx="5" cy="5" r="3.8" stroke="#444" stroke-width="1.8" fill="none"/><path d="M7.8 7.8l3.2 3.2" stroke="#444" stroke-width="2.2" stroke-linecap="round"/></svg></div>
<div class="abs tool" style="left:713px;top:683px;color:#505050">查找</div>
<div class="abs" style="left:750px;top:683px;height:18px;display:flex;align-items:center"><svg width="12" height="11" viewBox="0 0 12 11"><rect x=".5" y=".5" width="11" height="10" fill="none" stroke="#555" stroke-width="1"/><path d="M2 2.2h8" stroke="#555" stroke-width="1.6"/><path d="M2 5h1.6M5.2 5h1.6M8.4 5h1.6M2 7h1.6M5.2 7h1.6M8.4 7h1.6M2 9h1.6M5.2 9h1.6M8.4 9h1.6" stroke="#555" stroke-width="1.2"/></svg></div>
<div class="abs tool" style="left:766px;top:683px;color:#505050">计算器</div>
<div class="abs lbl" style="left:67px;top:714px;">业务员</div>
<div class="abs" style="left:150px;top:741px"><svg width="10" height="6" viewBox="0 0 10 6"><path d="M.7 .8l4.3 4L9.3 .8" stroke="#8c8c8c" stroke-width="1.2" fill="none"/></svg></div>
<div class="abs uline" style="left:62px;top:759px;width:103px;height:1px;"></div>
<div class="abs lbl" style="left:190px;top:714px;">合同号</div>
<div class="abs uline" style="left:185px;top:759px;width:164px;height:1px;"></div>
<div class="abs lbl" style="left:374px;top:714px;">币种</div>
<div class="abs" style="left:457px;top:741px"><svg width="10" height="6" viewBox="0 0 10 6"><path d="M.7 .8l4.3 4L9.3 .8" stroke="#8c8c8c" stroke-width="1.2" fill="none"/></svg></div>
<div class="abs uline" style="left:369px;top:759px;width:103px;height:1px;"></div>
<div class="abs lbl" style="left:497px;top:714px;">汇率</div>
<div class="abs" style="left:492px;top:732px;width:103px;height:27px;background:#e6fafa"></div>
<div class="abs val" style="left:497px;top:736px;color:#222;font-size:14px;letter-spacing:-.3px">0.00</div>
<div class="abs uline" style="left:492px;top:759px;width:103px;height:1px;"></div>
<div class="abs lbl" style="left:620px;top:714px;">单据备注</div>
<div class="abs uline" style="left:615px;top:759px;width:594px;height:1px;"></div>
<div class="abs chk" style="left:1229px;top:722px;width:17px;height:17px;"></div>
<div class="abs clbl" style="left:1254px;top:723px;">产品代号/版本</div>
<div class="abs chk" style="left:62px;top:778px;width:17px;height:17px;"></div>
<div class="abs clbl" style="left:87px;top:779px;">数量</div>
<div class="abs chk" style="left:308px;top:778px;width:17px;height:17px;"></div>
<div class="abs clbl" style="left:333px;top:779px;">交货日期</div>
<div class="abs chk" style="left:553px;top:778px;width:17px;height:17px;"></div>
<div class="abs clbl" style="left:578px;top:779px;">价格</div>
<div class="abs chk" style="left:799px;top:778px;width:17px;height:17px;"></div>
<div class="abs clbl" style="left:824px;top:779px;">质量要求</div>
<div class="abs chk" style="left:1290px;top:778px;width:17px;height:17px;"></div>
<div class="abs clbl" style="left:1315px;top:779px;">包装要求</div>
<div class="abs clbl" style="left:1050px;top:770px;">质量要求符合</div>
<div class="abs" style="left:27px;top:797px;width:1504px;height:38px;background:#f8f8f8"></div>
<div class="abs" style="left:37px;top:807px;width:17px;height:17px;background:#4fb9dd;border-radius:2px"></div>
<svg class="abs" style="left:40px;top:811px" width="11" height="9" viewBox="0 0 11 9"><path d="M1.2 4.4l3 3 5.6-6" stroke="#fff" stroke-width="2.5" fill="none"/></svg>
<div class="abs" style="left:62px;top:808px;font-size:12px;line-height:17px;color:#222;white-space:nowrap">确认并关闭窗口</div>
<div class="abs fb" style="left:1207px;top:803px;width:54px;height:26px;background:#3a8ee6;color:#fff;font-weight:bold">保存</div>
<div class="abs fb" style="left:1269px;top:803px;width:90px;height:26px;background:#5cb85c;color:#fff;font-weight:bold">保存并审核</div>
<div class="abs fb" style="left:1366px;top:803px;width:92px;height:26px;background:#f4f4f4;border:1px solid #dcdcdc;color:#333;line-height:27px">添加并继续</div>
<div class="abs fb" style="left:1464px;top:803px;width:56px;height:26px;background:#f4f4f4;border:1px solid #dcdcdc;color:#333;line-height:27px">关闭</div>
<svg class="abs" style="left:1520px;top:824px" width="10" height="10" viewBox="0 0 10 10"><path d="M9 1L1 9M9 4L4 9M9 7L7 9" stroke="#888" stroke-width="1"/></svg>
<!-- watermark -->
<div class="abs wm" style="left:-69px;top:10.0px;width:160px;height:34px">System 超级管理员<br>@yuniyun.com</div>
<div class="abs wm" style="left:235px;top:10.0px;width:160px;height:34px">System 超级管理员<br>@yuniyun.com</div>
<div class="abs wm" style="left:539px;top:10.0px;width:160px;height:34px">System 超级管理员<br>@yuniyun.com</div>
<div class="abs wm" style="left:843px;top:10.0px;width:160px;height:34px">System 超级管理员<br>@yuniyun.com</div>
<div class="abs wm" style="left:1147px;top:10.0px;width:160px;height:34px">System 超级管理员<br>@yuniyun.com</div>
<div class="abs wm" style="left:1451px;top:10.0px;width:160px;height:34px">System 超级管理员<br>@yuniyun.com</div>
<div class="abs wm" style="left:1755px;top:10.0px;width:160px;height:34px">System 超级管理员<br>@yuniyun.com</div>
<div class="abs wm" style="left:-69px;top:185.5px;width:160px;height:34px">System 超级管理员<br>@yuniyun.com</div>
<div class="abs wm" style="left:235px;top:185.5px;width:160px;height:34px">System 超级管理员<br>@yuniyun.com</div>
<div class="abs wm" style="left:539px;top:185.5px;width:160px;height:34px">System 超级管理员<br>@yuniyun.com</div>
<div class="abs wm" style="left:843px;top:185.5px;width:160px;height:34px">System 超级管理员<br>@yuniyun.com</div>
<div class="abs wm" style="left:1147px;top:185.5px;width:160px;height:34px">System 超级管理员<br>@yuniyun.com</div>
<div class="abs wm" style="left:1451px;top:185.5px;width:160px;height:34px">System 超级管理员<br>@yuniyun.com</div>
<div class="abs wm" style="left:1755px;top:185.5px;width:160px;height:34px">System 超级管理员<br>@yuniyun.com</div>
<div class="abs wm" style="left:-69px;top:361.0px;width:160px;height:34px">System 超级管理员<br>@yuniyun.com</div>
<div class="abs wm" style="left:235px;top:361.0px;width:160px;height:34px">System 超级管理员<br>@yuniyun.com</div>
<div class="abs wm" style="left:539px;top:361.0px;width:160px;height:34px">System 超级管理员<br>@yuniyun.com</div>
<div class="abs wm" style="left:843px;top:361.0px;width:160px;height:34px">System 超级管理员<br>@yuniyun.com</div>
<div class="abs wm" style="left:1147px;top:361.0px;width:160px;height:34px">System 超级管理员<br>@yuniyun.com</div>
<div class="abs wm" style="left:1451px;top:361.0px;width:160px;height:34px">System 超级管理员<br>@yuniyun.com</div>
<div class="abs wm" style="left:1755px;top:361.0px;width:160px;height:34px">System 超级管理员<br>@yuniyun.com</div>
<div class="abs wm" style="left:-69px;top:536.5px;width:160px;height:34px">System 超级管理员<br>@yuniyun.com</div>
<div class="abs wm" style="left:235px;top:536.5px;width:160px;height:34px">System 超级管理员<br>@yuniyun.com</div>
<div class="abs wm" style="left:539px;top:536.5px;width:160px;height:34px">System 超级管理员<br>@yuniyun.com</div>
<div class="abs wm" style="left:843px;top:536.5px;width:160px;height:34px">System 超级管理员<br>@yuniyun.com</div>
<div class="abs wm" style="left:1147px;top:536.5px;width:160px;height:34px">System 超级管理员<br>@yuniyun.com</div>
<div class="abs wm" style="left:1451px;top:536.5px;width:160px;height:34px">System 超级管理员<br>@yuniyun.com</div>
<div class="abs wm" style="left:1755px;top:536.5px;width:160px;height:34px">System 超级管理员<br>@yuniyun.com</div>
<div class="abs wm" style="left:-69px;top:712.0px;width:160px;height:34px">System 超级管理员<br>@yuniyun.com</div>
<div class="abs wm" style="left:235px;top:712.0px;width:160px;height:34px">System 超级管理员<br>@yuniyun.com</div>
<div class="abs wm" style="left:539px;top:712.0px;width:160px;height:34px">System 超级管理员<br>@yuniyun.com</div>
<div class="abs wm" style="left:843px;top:712.0px;width:160px;height:34px">System 超级管理员<br>@yuniyun.com</div>
<div class="abs wm" style="left:1147px;top:712.0px;width:160px;height:34px">System 超级管理员<br>@yuniyun.com</div>
<div class="abs wm" style="left:1451px;top:712.0px;width:160px;height:34px">System 超级管理员<br>@yuniyun.com</div>
<div class="abs wm" style="left:1755px;top:712.0px;width:160px;height:34px">System 超级管理员<br>@yuniyun.com</div>
</body>
</html>
